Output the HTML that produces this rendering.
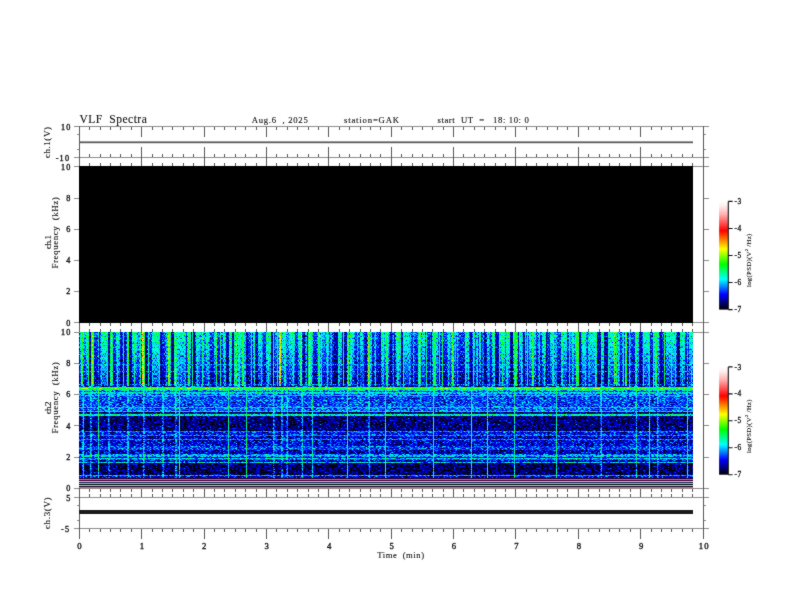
<!DOCTYPE html><html><head><meta charset="utf-8"><style>html,body{margin:0;padding:0;background:#fff;width:792px;height:612px;overflow:hidden;position:relative}</style></head><body><svg width="792" height="612" viewBox="0 0 792 612" style="position:absolute;left:0;top:0;will-change:transform"><defs><filter id="bl" filterUnits="userSpaceOnUse" x="0" y="0" width="792" height="612" color-interpolation-filters="sRGB"><feConvolveMatrix order="3" kernelMatrix="1 2 1 2 24 2 1 2 1" edgeMode="duplicate"/></filter></defs><g filter="url(#bl)"><rect x="0" y="0" width="792" height="612" fill="#fff"/><defs><linearGradient id="cb" x1="0" y1="0" x2="0" y2="1"><stop offset="0" stop-color="#fff"/><stop offset="0.04" stop-color="#fff0f0"/><stop offset="0.12" stop-color="#ffb0b0"/><stop offset="0.27" stop-color="#ff0000"/><stop offset="0.44" stop-color="#ffff00"/><stop offset="0.58" stop-color="#00ff00"/><stop offset="0.72" stop-color="#00ffff"/><stop offset="0.86" stop-color="#0000ff"/><stop offset="1" stop-color="#000000"/></linearGradient></defs><path d="M79.0 126.5H704.0M79.0 157.5H704.0M79.0 166.5H704.0M79.0 322.5H704.0M79.0 332.5H704.0M79.0 488.5H704.0M79.0 497.5H704.0M79.0 528.5H704.0M74.0 126.5H79.0M704.0 126.5H709.0M74.0 157.5H79.0M704.0 157.5H709.0M74.0 166.5H79.0M704.0 166.5H709.0M74.0 322.5H79.0M704.0 322.5H709.0M74.0 332.5H79.0M704.0 332.5H709.0M74.0 488.5H79.0M704.0 488.5H709.0M74.0 497.5H79.0M704.0 497.5H709.0M74.0 528.5H79.0M704.0 528.5H709.0M74.0 198.5H79.0M704.0 198.5H709.0M74.0 229.5H79.0M704.0 229.5H709.0M74.0 260.5H79.0M704.0 260.5H709.0M74.0 291.5H79.0M704.0 291.5H709.0M74.0 363.5H79.0M704.0 363.5H709.0M74.0 394.5H79.0M704.0 394.5H709.0M74.0 425.5H79.0M704.0 425.5H709.0M74.0 457.5H79.0M704.0 457.5H709.0M77.0 134.5H79.0M704.0 134.5H706.0M77.0 149.5H79.0M704.0 149.5H706.0M77.0 505.5H79.0M704.0 505.5H706.0M77.0 520.5H79.0M704.0 520.5H706.0" stroke="#8c8c8c" stroke-width="1" fill="none"/><path d="M79.5 126.0V539.0M703.5 126.0V539.0M79.5 127.0V137.0M79.5 147.0V157.0M79.5 157.0V166.0M79.5 323.0V332.0M79.5 489.0V497.0M79.5 529.0V539.0M89.5 127.0V130.0M89.5 154.0V157.0M89.5 163.0V166.0M89.5 323.0V326.0M89.5 329.0V332.0M89.5 489.0V492.0M89.5 494.0V497.0M89.5 529.0V532.0M100.5 127.0V130.0M100.5 154.0V157.0M100.5 163.0V166.0M100.5 323.0V326.0M100.5 329.0V332.0M100.5 489.0V492.0M100.5 494.0V497.0M100.5 529.0V532.0M110.5 127.0V130.0M110.5 154.0V157.0M110.5 163.0V166.0M110.5 323.0V326.0M110.5 329.0V332.0M110.5 489.0V492.0M110.5 494.0V497.0M110.5 529.0V532.0M120.5 127.0V130.0M120.5 154.0V157.0M120.5 163.0V166.0M120.5 323.0V326.0M120.5 329.0V332.0M120.5 489.0V492.0M120.5 494.0V497.0M120.5 529.0V532.0M131.5 127.0V130.0M131.5 154.0V157.0M131.5 163.0V166.0M131.5 323.0V326.0M131.5 329.0V332.0M131.5 489.0V492.0M131.5 494.0V497.0M131.5 529.0V532.0M141.5 127.0V137.0M141.5 147.0V157.0M141.5 157.0V166.0M141.5 323.0V332.0M141.5 489.0V497.0M141.5 529.0V539.0M152.5 127.0V130.0M152.5 154.0V157.0M152.5 163.0V166.0M152.5 323.0V326.0M152.5 329.0V332.0M152.5 489.0V492.0M152.5 494.0V497.0M152.5 529.0V532.0M162.5 127.0V130.0M162.5 154.0V157.0M162.5 163.0V166.0M162.5 323.0V326.0M162.5 329.0V332.0M162.5 489.0V492.0M162.5 494.0V497.0M162.5 529.0V532.0M172.5 127.0V130.0M172.5 154.0V157.0M172.5 163.0V166.0M172.5 323.0V326.0M172.5 329.0V332.0M172.5 489.0V492.0M172.5 494.0V497.0M172.5 529.0V532.0M183.5 127.0V130.0M183.5 154.0V157.0M183.5 163.0V166.0M183.5 323.0V326.0M183.5 329.0V332.0M183.5 489.0V492.0M183.5 494.0V497.0M183.5 529.0V532.0M193.5 127.0V130.0M193.5 154.0V157.0M193.5 163.0V166.0M193.5 323.0V326.0M193.5 329.0V332.0M193.5 489.0V492.0M193.5 494.0V497.0M193.5 529.0V532.0M204.5 127.0V137.0M204.5 147.0V157.0M204.5 157.0V166.0M204.5 323.0V332.0M204.5 489.0V497.0M204.5 529.0V539.0M214.5 127.0V130.0M214.5 154.0V157.0M214.5 163.0V166.0M214.5 323.0V326.0M214.5 329.0V332.0M214.5 489.0V492.0M214.5 494.0V497.0M214.5 529.0V532.0M224.5 127.0V130.0M224.5 154.0V157.0M224.5 163.0V166.0M224.5 323.0V326.0M224.5 329.0V332.0M224.5 489.0V492.0M224.5 494.0V497.0M224.5 529.0V532.0M235.5 127.0V130.0M235.5 154.0V157.0M235.5 163.0V166.0M235.5 323.0V326.0M235.5 329.0V332.0M235.5 489.0V492.0M235.5 494.0V497.0M235.5 529.0V532.0M245.5 127.0V130.0M245.5 154.0V157.0M245.5 163.0V166.0M245.5 323.0V326.0M245.5 329.0V332.0M245.5 489.0V492.0M245.5 494.0V497.0M245.5 529.0V532.0M256.5 127.0V130.0M256.5 154.0V157.0M256.5 163.0V166.0M256.5 323.0V326.0M256.5 329.0V332.0M256.5 489.0V492.0M256.5 494.0V497.0M256.5 529.0V532.0M266.5 127.0V137.0M266.5 147.0V157.0M266.5 157.0V166.0M266.5 323.0V332.0M266.5 489.0V497.0M266.5 529.0V539.0M276.5 127.0V130.0M276.5 154.0V157.0M276.5 163.0V166.0M276.5 323.0V326.0M276.5 329.0V332.0M276.5 489.0V492.0M276.5 494.0V497.0M276.5 529.0V532.0M287.5 127.0V130.0M287.5 154.0V157.0M287.5 163.0V166.0M287.5 323.0V326.0M287.5 329.0V332.0M287.5 489.0V492.0M287.5 494.0V497.0M287.5 529.0V532.0M297.5 127.0V130.0M297.5 154.0V157.0M297.5 163.0V166.0M297.5 323.0V326.0M297.5 329.0V332.0M297.5 489.0V492.0M297.5 494.0V497.0M297.5 529.0V532.0M308.5 127.0V130.0M308.5 154.0V157.0M308.5 163.0V166.0M308.5 323.0V326.0M308.5 329.0V332.0M308.5 489.0V492.0M308.5 494.0V497.0M308.5 529.0V532.0M318.5 127.0V130.0M318.5 154.0V157.0M318.5 163.0V166.0M318.5 323.0V326.0M318.5 329.0V332.0M318.5 489.0V492.0M318.5 494.0V497.0M318.5 529.0V532.0M328.5 127.0V137.0M328.5 147.0V157.0M328.5 157.0V166.0M328.5 323.0V332.0M328.5 489.0V497.0M328.5 529.0V539.0M339.5 127.0V130.0M339.5 154.0V157.0M339.5 163.0V166.0M339.5 323.0V326.0M339.5 329.0V332.0M339.5 489.0V492.0M339.5 494.0V497.0M339.5 529.0V532.0M349.5 127.0V130.0M349.5 154.0V157.0M349.5 163.0V166.0M349.5 323.0V326.0M349.5 329.0V332.0M349.5 489.0V492.0M349.5 494.0V497.0M349.5 529.0V532.0M360.5 127.0V130.0M360.5 154.0V157.0M360.5 163.0V166.0M360.5 323.0V326.0M360.5 329.0V332.0M360.5 489.0V492.0M360.5 494.0V497.0M360.5 529.0V532.0M370.5 127.0V130.0M370.5 154.0V157.0M370.5 163.0V166.0M370.5 323.0V326.0M370.5 329.0V332.0M370.5 489.0V492.0M370.5 494.0V497.0M370.5 529.0V532.0M380.5 127.0V130.0M380.5 154.0V157.0M380.5 163.0V166.0M380.5 323.0V326.0M380.5 329.0V332.0M380.5 489.0V492.0M380.5 494.0V497.0M380.5 529.0V532.0M391.5 127.0V137.0M391.5 147.0V157.0M391.5 157.0V166.0M391.5 323.0V332.0M391.5 489.0V497.0M391.5 529.0V539.0M401.5 127.0V130.0M401.5 154.0V157.0M401.5 163.0V166.0M401.5 323.0V326.0M401.5 329.0V332.0M401.5 489.0V492.0M401.5 494.0V497.0M401.5 529.0V532.0M412.5 127.0V130.0M412.5 154.0V157.0M412.5 163.0V166.0M412.5 323.0V326.0M412.5 329.0V332.0M412.5 489.0V492.0M412.5 494.0V497.0M412.5 529.0V532.0M422.5 127.0V130.0M422.5 154.0V157.0M422.5 163.0V166.0M422.5 323.0V326.0M422.5 329.0V332.0M422.5 489.0V492.0M422.5 494.0V497.0M422.5 529.0V532.0M432.5 127.0V130.0M432.5 154.0V157.0M432.5 163.0V166.0M432.5 323.0V326.0M432.5 329.0V332.0M432.5 489.0V492.0M432.5 494.0V497.0M432.5 529.0V532.0M443.5 127.0V130.0M443.5 154.0V157.0M443.5 163.0V166.0M443.5 323.0V326.0M443.5 329.0V332.0M443.5 489.0V492.0M443.5 494.0V497.0M443.5 529.0V532.0M453.5 127.0V137.0M453.5 147.0V157.0M453.5 157.0V166.0M453.5 323.0V332.0M453.5 489.0V497.0M453.5 529.0V539.0M463.5 127.0V130.0M463.5 154.0V157.0M463.5 163.0V166.0M463.5 323.0V326.0M463.5 329.0V332.0M463.5 489.0V492.0M463.5 494.0V497.0M463.5 529.0V532.0M474.5 127.0V130.0M474.5 154.0V157.0M474.5 163.0V166.0M474.5 323.0V326.0M474.5 329.0V332.0M474.5 489.0V492.0M474.5 494.0V497.0M474.5 529.0V532.0M484.5 127.0V130.0M484.5 154.0V157.0M484.5 163.0V166.0M484.5 323.0V326.0M484.5 329.0V332.0M484.5 489.0V492.0M484.5 494.0V497.0M484.5 529.0V532.0M495.5 127.0V130.0M495.5 154.0V157.0M495.5 163.0V166.0M495.5 323.0V326.0M495.5 329.0V332.0M495.5 489.0V492.0M495.5 494.0V497.0M495.5 529.0V532.0M505.5 127.0V130.0M505.5 154.0V157.0M505.5 163.0V166.0M505.5 323.0V326.0M505.5 329.0V332.0M505.5 489.0V492.0M505.5 494.0V497.0M505.5 529.0V532.0M515.5 127.0V137.0M515.5 147.0V157.0M515.5 157.0V166.0M515.5 323.0V332.0M515.5 489.0V497.0M515.5 529.0V539.0M526.5 127.0V130.0M526.5 154.0V157.0M526.5 163.0V166.0M526.5 323.0V326.0M526.5 329.0V332.0M526.5 489.0V492.0M526.5 494.0V497.0M526.5 529.0V532.0M536.5 127.0V130.0M536.5 154.0V157.0M536.5 163.0V166.0M536.5 323.0V326.0M536.5 329.0V332.0M536.5 489.0V492.0M536.5 494.0V497.0M536.5 529.0V532.0M547.5 127.0V130.0M547.5 154.0V157.0M547.5 163.0V166.0M547.5 323.0V326.0M547.5 329.0V332.0M547.5 489.0V492.0M547.5 494.0V497.0M547.5 529.0V532.0M557.5 127.0V130.0M557.5 154.0V157.0M557.5 163.0V166.0M557.5 323.0V326.0M557.5 329.0V332.0M557.5 489.0V492.0M557.5 494.0V497.0M557.5 529.0V532.0M567.5 127.0V130.0M567.5 154.0V157.0M567.5 163.0V166.0M567.5 323.0V326.0M567.5 329.0V332.0M567.5 489.0V492.0M567.5 494.0V497.0M567.5 529.0V532.0M578.5 127.0V137.0M578.5 147.0V157.0M578.5 157.0V166.0M578.5 323.0V332.0M578.5 489.0V497.0M578.5 529.0V539.0M588.5 127.0V130.0M588.5 154.0V157.0M588.5 163.0V166.0M588.5 323.0V326.0M588.5 329.0V332.0M588.5 489.0V492.0M588.5 494.0V497.0M588.5 529.0V532.0M599.5 127.0V130.0M599.5 154.0V157.0M599.5 163.0V166.0M599.5 323.0V326.0M599.5 329.0V332.0M599.5 489.0V492.0M599.5 494.0V497.0M599.5 529.0V532.0M609.5 127.0V130.0M609.5 154.0V157.0M609.5 163.0V166.0M609.5 323.0V326.0M609.5 329.0V332.0M609.5 489.0V492.0M609.5 494.0V497.0M609.5 529.0V532.0M619.5 127.0V130.0M619.5 154.0V157.0M619.5 163.0V166.0M619.5 323.0V326.0M619.5 329.0V332.0M619.5 489.0V492.0M619.5 494.0V497.0M619.5 529.0V532.0M630.5 127.0V130.0M630.5 154.0V157.0M630.5 163.0V166.0M630.5 323.0V326.0M630.5 329.0V332.0M630.5 489.0V492.0M630.5 494.0V497.0M630.5 529.0V532.0M640.5 127.0V137.0M640.5 147.0V157.0M640.5 157.0V166.0M640.5 323.0V332.0M640.5 489.0V497.0M640.5 529.0V539.0M651.5 127.0V130.0M651.5 154.0V157.0M651.5 163.0V166.0M651.5 323.0V326.0M651.5 329.0V332.0M651.5 489.0V492.0M651.5 494.0V497.0M651.5 529.0V532.0M661.5 127.0V130.0M661.5 154.0V157.0M661.5 163.0V166.0M661.5 323.0V326.0M661.5 329.0V332.0M661.5 489.0V492.0M661.5 494.0V497.0M661.5 529.0V532.0M671.5 127.0V130.0M671.5 154.0V157.0M671.5 163.0V166.0M671.5 323.0V326.0M671.5 329.0V332.0M671.5 489.0V492.0M671.5 494.0V497.0M671.5 529.0V532.0M682.5 127.0V130.0M682.5 154.0V157.0M682.5 163.0V166.0M682.5 323.0V326.0M682.5 329.0V332.0M682.5 489.0V492.0M682.5 494.0V497.0M682.5 529.0V532.0M692.5 127.0V130.0M692.5 154.0V157.0M692.5 163.0V166.0M692.5 323.0V326.0M692.5 329.0V332.0M692.5 489.0V492.0M692.5 494.0V497.0M692.5 529.0V532.0M703.5 127.0V137.0M703.5 147.0V157.0M703.5 157.0V166.0M703.5 323.0V332.0M703.5 489.0V497.0M703.5 529.0V539.0" stroke="#585858" stroke-width="1" fill="none"/><rect x="79" y="166" width="614" height="157" fill="#000"/><g><defs><filter id="spu" filterUnits="userSpaceOnUse" x="79" y="332" width="614.0" height="54.5" color-interpolation-filters="sRGB"><feTurbulence type="fractalNoise" baseFrequency="1.0 0.45" numOctaves="2" seed="7" result="n"/><feColorMatrix in="n" type="matrix" values="1 0 0 0 0 1 0 0 0 0 1 0 0 0 0 0 0 0 0 1" result="g"/><feComposite in="SourceGraphic" in2="g" operator="arithmetic" k1="0" k2="1" k3="0.55" k4="-0.275" result="s"/><feComponentTransfer in="s"><feFuncR type="table" tableValues="0.000 0.000 0.000 0.000 0.000 0.000 0.000 0.000 0.000 0.000 0.000 0.000 0.000 0.000 0.000 0.000 0.000 0.000 0.141 0.322 0.502 0.678 0.859 1.000 1.000 1.000 1.000 1.000 1.000 1.000 1.000 1.000 1.000 1.000 1.000 1.000 1.000 1.000 1.000 1.000 1.000"/><feFuncG type="table" tableValues="0.000 0.000 0.000 0.000 0.000 0.000 0.000 0.180 0.357 0.537 0.714 0.894 1.000 1.000 1.000 1.000 1.000 1.000 1.000 1.000 1.000 1.000 1.000 0.961 0.769 0.576 0.384 0.192 0.000 0.090 0.184 0.275 0.365 0.459 0.549 0.639 0.733 0.824 0.898 0.949 1.000"/><feFuncB type="table" tableValues="0.000 0.169 0.333 0.502 0.667 0.831 1.000 1.000 1.000 1.000 1.000 1.000 0.929 0.749 0.573 0.392 0.216 0.035 0.000 0.000 0.000 0.000 0.000 0.000 0.000 0.000 0.000 0.000 0.000 0.090 0.184 0.275 0.365 0.459 0.549 0.639 0.733 0.824 0.898 0.949 1.000"/><feFuncA type="linear" slope="0" intercept="1"/></feComponentTransfer></filter><filter id="spl" filterUnits="userSpaceOnUse" x="79" y="386.5" width="614.0" height="91.5" color-interpolation-filters="sRGB"><feTurbulence type="fractalNoise" baseFrequency="0.5 1.5" numOctaves="2" seed="11" result="n"/><feColorMatrix in="n" type="matrix" values="1 0 0 0 0 1 0 0 0 0 1 0 0 0 0 0 0 0 0 1" result="g"/><feComposite in="SourceGraphic" in2="g" operator="arithmetic" k1="0" k2="1" k3="0.5" k4="-0.25" result="s"/><feComponentTransfer in="s"><feFuncR type="table" tableValues="0.000 0.000 0.000 0.000 0.000 0.000 0.000 0.000 0.000 0.000 0.000 0.000 0.000 0.000 0.000 0.000 0.000 0.000 0.141 0.322 0.502 0.678 0.859 1.000 1.000 1.000 1.000 1.000 1.000 1.000 1.000 1.000 1.000 1.000 1.000 1.000 1.000 1.000 1.000 1.000 1.000"/><feFuncG type="table" tableValues="0.000 0.000 0.000 0.000 0.000 0.000 0.000 0.180 0.357 0.537 0.714 0.894 1.000 1.000 1.000 1.000 1.000 1.000 1.000 1.000 1.000 1.000 1.000 0.961 0.769 0.576 0.384 0.192 0.000 0.090 0.184 0.275 0.365 0.459 0.549 0.639 0.733 0.824 0.898 0.949 1.000"/><feFuncB type="table" tableValues="0.000 0.169 0.333 0.502 0.667 0.831 1.000 1.000 1.000 1.000 1.000 1.000 0.929 0.749 0.573 0.392 0.216 0.035 0.000 0.000 0.000 0.000 0.000 0.000 0.000 0.000 0.000 0.000 0.000 0.090 0.184 0.275 0.365 0.459 0.549 0.639 0.733 0.824 0.898 0.949 1.000"/><feFuncA type="linear" slope="0" intercept="1"/></feComponentTransfer></filter><linearGradient id="fade2" x1="0" y1="0" x2="0" y2="1"><stop offset="0" stop-color="#000" stop-opacity="0"/><stop offset="1" stop-color="#000" stop-opacity="0.55"/></linearGradient></defs><g filter="url(#spu)"><rect x="79" y="332" width="614.0" height="54.5" fill="#000"/><rect x="79.0" y="332" width="1.0" height="54.5" fill="#303030"/><rect x="80.0" y="332" width="1.0" height="54.5" fill="#545454"/><rect x="83.0" y="332" width="1.0" height="54.5" fill="#545454"/><rect x="84.0" y="332" width="2.0" height="54.5" fill="#424242"/><rect x="86.0" y="332" width="2.5" height="54.5" fill="#5e5e5e"/><rect x="88.5" y="332" width="2.5" height="54.5" fill="#171717"/><rect x="91.0" y="332" width="0.2" height="54.5" fill="#545454"/><rect x="93.2" y="332" width="0.2" height="54.5" fill="#545454"/><rect x="93.5" y="332" width="4.5" height="54.5" fill="#303030"/><rect x="98.0" y="332" width="1.0" height="54.5" fill="#545454"/><rect x="99.0" y="332" width="3.0" height="54.5" fill="#171717"/><rect x="102.0" y="332" width="6.5" height="54.5" fill="#5e5e5e"/><rect x="108.5" y="332" width="2.0" height="54.5" fill="#171717"/><rect x="110.5" y="332" width="0.2" height="54.5" fill="#545454"/><rect x="112.8" y="332" width="0.2" height="54.5" fill="#545454"/><rect x="113.0" y="332" width="2.5" height="54.5" fill="#303030"/><rect x="115.5" y="332" width="5.0" height="54.5" fill="#545454"/><rect x="120.5" y="332" width="2.0" height="54.5" fill="#1f1f1f"/><rect x="122.5" y="332" width="1.5" height="54.5" fill="#545454"/><rect x="124.0" y="332" width="3.0" height="54.5" fill="#1f1f1f"/><rect x="129.0" y="332" width="3.0" height="54.5" fill="#1f1f1f"/><rect x="132.0" y="332" width="5.0" height="54.5" fill="#545454"/><rect x="137.0" y="332" width="5.0" height="54.5" fill="#424242"/><rect x="144.0" y="332" width="2.5" height="54.5" fill="#171717"/><rect x="146.5" y="332" width="5.5" height="54.5" fill="#303030"/><rect x="152.0" y="332" width="8.0" height="54.5" fill="#5e5e5e"/><rect x="160.0" y="332" width="2.0" height="54.5" fill="#1f1f1f"/><rect x="162.0" y="332" width="5.0" height="54.5" fill="#303030"/><rect x="167.0" y="332" width="1.0" height="54.5" fill="#545454"/><rect x="170.0" y="332" width="1.0" height="54.5" fill="#545454"/><rect x="171.0" y="332" width="3.0" height="54.5" fill="#171717"/><rect x="174.0" y="332" width="0.5" height="54.5" fill="#545454"/><rect x="176.5" y="332" width="0.5" height="54.5" fill="#545454"/><rect x="177.0" y="332" width="6.0" height="54.5" fill="#545454"/><rect x="183.0" y="332" width="2.0" height="54.5" fill="#545454"/><rect x="185.0" y="332" width="1.6" height="54.5" fill="#1f1f1f"/><rect x="186.6" y="332" width="1.2" height="54.5" fill="#545454"/><rect x="189.8" y="332" width="1.2" height="54.5" fill="#545454"/><rect x="191.0" y="332" width="4.4" height="54.5" fill="#171717"/><rect x="195.4" y="332" width="4.6" height="54.5" fill="#545454"/><rect x="200.0" y="332" width="6.0" height="54.5" fill="#424242"/><rect x="206.0" y="332" width="2.7" height="54.5" fill="#5e5e5e"/><rect x="208.7" y="332" width="5.0" height="54.5" fill="#303030"/><rect x="213.7" y="332" width="3.3" height="54.5" fill="#545454"/><rect x="217.0" y="332" width="5.5" height="54.5" fill="#303030"/><rect x="222.5" y="332" width="2.5" height="54.5" fill="#545454"/><rect x="225.0" y="332" width="4.0" height="54.5" fill="#1f1f1f"/><rect x="229.0" y="332" width="3.0" height="54.5" fill="#5e5e5e"/><rect x="232.0" y="332" width="2.5" height="54.5" fill="#1f1f1f"/><rect x="234.5" y="332" width="0.9" height="54.5" fill="#545454"/><rect x="237.4" y="332" width="0.9" height="54.5" fill="#545454"/><rect x="238.3" y="332" width="2.7" height="54.5" fill="#545454"/><rect x="241.0" y="332" width="0.8" height="54.5" fill="#545454"/><rect x="243.8" y="332" width="0.8" height="54.5" fill="#545454"/><rect x="244.7" y="332" width="3.1" height="54.5" fill="#1f1f1f"/><rect x="247.8" y="332" width="5.1" height="54.5" fill="#303030"/><rect x="252.9" y="332" width="1.9" height="54.5" fill="#545454"/><rect x="254.8" y="332" width="3.2" height="54.5" fill="#1f1f1f"/><rect x="258.0" y="332" width="3.0" height="54.5" fill="#545454"/><rect x="261.0" y="332" width="5.0" height="54.5" fill="#303030"/><rect x="266.0" y="332" width="5.0" height="54.5" fill="#5e5e5e"/><rect x="271.0" y="332" width="4.0" height="54.5" fill="#1f1f1f"/><rect x="275.0" y="332" width="4.0" height="54.5" fill="#424242"/><rect x="281.0" y="332" width="3.0" height="54.5" fill="#545454"/><rect x="284.0" y="332" width="0.3" height="54.5" fill="#545454"/><rect x="286.3" y="332" width="0.3" height="54.5" fill="#545454"/><rect x="286.6" y="332" width="2.4" height="54.5" fill="#424242"/><rect x="289.0" y="332" width="6.4" height="54.5" fill="#545454"/><rect x="295.4" y="332" width="2.6" height="54.5" fill="#303030"/><rect x="298.0" y="332" width="2.0" height="54.5" fill="#545454"/><rect x="300.0" y="332" width="0.2" height="54.5" fill="#545454"/><rect x="302.2" y="332" width="0.2" height="54.5" fill="#545454"/><rect x="302.4" y="332" width="5.6" height="54.5" fill="#1f1f1f"/><rect x="308.0" y="332" width="0.3" height="54.5" fill="#545454"/><rect x="310.3" y="332" width="0.3" height="54.5" fill="#545454"/><rect x="310.6" y="332" width="2.4" height="54.5" fill="#545454"/><rect x="313.0" y="332" width="5.0" height="54.5" fill="#303030"/><rect x="318.0" y="332" width="0.4" height="54.5" fill="#545454"/><rect x="320.4" y="332" width="0.3" height="54.5" fill="#545454"/><rect x="320.7" y="332" width="5.0" height="54.5" fill="#424242"/><rect x="325.7" y="332" width="3.3" height="54.5" fill="#545454"/><rect x="329.0" y="332" width="5.5" height="54.5" fill="#303030"/><rect x="334.5" y="332" width="3.8" height="54.5" fill="#1f1f1f"/><rect x="338.3" y="332" width="3.7" height="54.5" fill="#545454"/><rect x="342.0" y="332" width="5.0" height="54.5" fill="#1f1f1f"/><rect x="347.0" y="332" width="0.4" height="54.5" fill="#545454"/><rect x="349.4" y="332" width="0.3" height="54.5" fill="#545454"/><rect x="349.7" y="332" width="5.1" height="54.5" fill="#545454"/><rect x="354.8" y="332" width="5.0" height="54.5" fill="#303030"/><rect x="359.8" y="332" width="3.2" height="54.5" fill="#545454"/><rect x="363.0" y="332" width="4.4" height="54.5" fill="#1f1f1f"/><rect x="367.4" y="332" width="0.3" height="54.5" fill="#545454"/><rect x="369.7" y="332" width="0.3" height="54.5" fill="#545454"/><rect x="370.0" y="332" width="2.4" height="54.5" fill="#545454"/><rect x="372.4" y="332" width="6.6" height="54.5" fill="#303030"/><rect x="379.0" y="332" width="2.0" height="54.5" fill="#1f1f1f"/><rect x="381.0" y="332" width="3.7" height="54.5" fill="#5e5e5e"/><rect x="384.7" y="332" width="1.5" height="54.5" fill="#545454"/><rect x="388.2" y="332" width="1.5" height="54.5" fill="#545454"/><rect x="389.7" y="332" width="5.7" height="54.5" fill="#1f1f1f"/><rect x="395.4" y="332" width="5.6" height="54.5" fill="#5e5e5e"/><rect x="401.0" y="332" width="3.0" height="54.5" fill="#1f1f1f"/><rect x="404.0" y="332" width="5.3" height="54.5" fill="#545454"/><rect x="409.3" y="332" width="8.2" height="54.5" fill="#303030"/><rect x="417.5" y="332" width="0.9" height="54.5" fill="#545454"/><rect x="420.4" y="332" width="0.9" height="54.5" fill="#545454"/><rect x="421.3" y="332" width="3.7" height="54.5" fill="#545454"/><rect x="425.0" y="332" width="4.5" height="54.5" fill="#303030"/><rect x="429.5" y="332" width="2.5" height="54.5" fill="#171717"/><rect x="432.0" y="332" width="2.1" height="54.5" fill="#545454"/><rect x="436.1" y="332" width="2.2" height="54.5" fill="#545454"/><rect x="438.3" y="332" width="8.9" height="54.5" fill="#303030"/><rect x="447.2" y="332" width="3.1" height="54.5" fill="#545454"/><rect x="450.3" y="332" width="1.2" height="54.5" fill="#545454"/><rect x="453.6" y="332" width="1.2" height="54.5" fill="#545454"/><rect x="454.8" y="332" width="1.9" height="54.5" fill="#545454"/><rect x="456.7" y="332" width="9.3" height="54.5" fill="#303030"/><rect x="466.0" y="332" width="2.6" height="54.5" fill="#545454"/><rect x="468.6" y="332" width="3.8" height="54.5" fill="#1f1f1f"/><rect x="472.4" y="332" width="2.6" height="54.5" fill="#545454"/><rect x="475.0" y="332" width="4.0" height="54.5" fill="#303030"/><rect x="479.0" y="332" width="2.5" height="54.5" fill="#5e5e5e"/><rect x="481.5" y="332" width="5.1" height="54.5" fill="#1f1f1f"/><rect x="486.6" y="332" width="2.4" height="54.5" fill="#545454"/><rect x="489.0" y="332" width="2.6" height="54.5" fill="#303030"/><rect x="491.6" y="332" width="3.8" height="54.5" fill="#5e5e5e"/><rect x="495.4" y="332" width="3.8" height="54.5" fill="#1f1f1f"/><rect x="499.2" y="332" width="3.2" height="54.5" fill="#545454"/><rect x="502.4" y="332" width="3.1" height="54.5" fill="#5e5e5e"/><rect x="505.5" y="332" width="1.5" height="54.5" fill="#545454"/><rect x="507.0" y="332" width="3.5" height="54.5" fill="#5e5e5e"/><rect x="510.5" y="332" width="2.5" height="54.5" fill="#171717"/><rect x="513.0" y="332" width="1.0" height="54.5" fill="#545454"/><rect x="514.0" y="332" width="1.0" height="54.5" fill="#545454"/><rect x="517.0" y="332" width="1.0" height="54.5" fill="#545454"/><rect x="518.0" y="332" width="1.0" height="54.5" fill="#1f1f1f"/><rect x="519.0" y="332" width="3.0" height="54.5" fill="#545454"/><rect x="522.0" y="332" width="3.0" height="54.5" fill="#1f1f1f"/><rect x="525.0" y="332" width="1.0" height="54.5" fill="#545454"/><rect x="526.0" y="332" width="2.5" height="54.5" fill="#303030"/><rect x="528.5" y="332" width="2.5" height="54.5" fill="#545454"/><rect x="531.0" y="332" width="0.8" height="54.5" fill="#545454"/><rect x="533.8" y="332" width="0.8" height="54.5" fill="#545454"/><rect x="534.5" y="332" width="1.5" height="54.5" fill="#545454"/><rect x="536.0" y="332" width="6.0" height="54.5" fill="#303030"/><rect x="542.0" y="332" width="4.0" height="54.5" fill="#545454"/><rect x="546.0" y="332" width="3.7" height="54.5" fill="#171717"/><rect x="549.7" y="332" width="2.3" height="54.5" fill="#545454"/><rect x="552.0" y="332" width="0.4" height="54.5" fill="#545454"/><rect x="554.4" y="332" width="0.4" height="54.5" fill="#545454"/><rect x="554.8" y="332" width="6.2" height="54.5" fill="#303030"/><rect x="561.0" y="332" width="6.4" height="54.5" fill="#545454"/><rect x="567.4" y="332" width="2.6" height="54.5" fill="#303030"/><rect x="570.0" y="332" width="5.0" height="54.5" fill="#424242"/><rect x="575.0" y="332" width="1.0" height="54.5" fill="#545454"/><rect x="578.0" y="332" width="1.0" height="54.5" fill="#545454"/><rect x="579.0" y="332" width="2.3" height="54.5" fill="#1f1f1f"/><rect x="581.3" y="332" width="3.7" height="54.5" fill="#5e5e5e"/><rect x="585.0" y="332" width="3.0" height="54.5" fill="#303030"/><rect x="588.0" y="332" width="9.0" height="54.5" fill="#545454"/><rect x="597.0" y="332" width="4.0" height="54.5" fill="#1f1f1f"/><rect x="601.0" y="332" width="3.0" height="54.5" fill="#5e5e5e"/><rect x="604.0" y="332" width="4.5" height="54.5" fill="#1f1f1f"/><rect x="608.5" y="332" width="6.9" height="54.5" fill="#545454"/><rect x="615.4" y="332" width="0.1" height="54.5" fill="#545454"/><rect x="617.5" y="332" width="0.1" height="54.5" fill="#545454"/><rect x="617.6" y="332" width="6.9" height="54.5" fill="#303030"/><rect x="624.5" y="332" width="0.5" height="54.5" fill="#545454"/><rect x="627.0" y="332" width="0.5" height="54.5" fill="#545454"/><rect x="627.5" y="332" width="7.5" height="54.5" fill="#303030"/><rect x="635.0" y="332" width="4.0" height="54.5" fill="#545454"/><rect x="639.0" y="332" width="3.6" height="54.5" fill="#1f1f1f"/><rect x="642.6" y="332" width="7.6" height="54.5" fill="#545454"/><rect x="650.2" y="332" width="2.8" height="54.5" fill="#303030"/><rect x="653.0" y="332" width="2.1" height="54.5" fill="#545454"/><rect x="657.1" y="332" width="2.1" height="54.5" fill="#545454"/><rect x="659.3" y="332" width="2.3" height="54.5" fill="#1f1f1f"/><rect x="661.6" y="332" width="3.8" height="54.5" fill="#303030"/><rect x="665.4" y="332" width="10.6" height="54.5" fill="#545454"/><rect x="676.0" y="332" width="3.8" height="54.5" fill="#171717"/><rect x="679.8" y="332" width="5.2" height="54.5" fill="#5e5e5e"/><rect x="685.0" y="332" width="3.8" height="54.5" fill="#303030"/><rect x="688.8" y="332" width="4.2" height="54.5" fill="#545454"/><rect x="79" y="332" width="614.0" height="54.5" fill="url(#fade2)"/><rect x="81.0" y="332" width="2.0" height="54.5" fill="#6b6b6b"/><rect x="91.2" y="332" width="2.0" height="54.5" fill="#7d7d7d"/><rect x="110.8" y="332" width="2.0" height="54.5" fill="#6b6b6b"/><rect x="127.0" y="332" width="2.0" height="54.5" fill="#6b6b6b"/><rect x="142.0" y="332" width="2.0" height="54.5" fill="#8f8f8f"/><rect x="168.0" y="332" width="2.0" height="54.5" fill="#7d7d7d"/><rect x="174.5" y="332" width="2.0" height="54.5" fill="#8f8f8f"/><rect x="187.8" y="332" width="2.0" height="54.5" fill="#6b6b6b"/><rect x="235.4" y="332" width="2.0" height="54.5" fill="#6b6b6b"/><rect x="241.8" y="332" width="2.0" height="54.5" fill="#6b6b6b"/><rect x="279.0" y="332" width="2.0" height="54.5" fill="#8f8f8f"/><rect x="284.3" y="332" width="2.0" height="54.5" fill="#6b6b6b"/><rect x="300.2" y="332" width="2.0" height="54.5" fill="#7d7d7d"/><rect x="308.3" y="332" width="2.0" height="54.5" fill="#7d7d7d"/><rect x="318.4" y="332" width="2.0" height="54.5" fill="#6b6b6b"/><rect x="347.4" y="332" width="2.0" height="54.5" fill="#6b6b6b"/><rect x="367.7" y="332" width="2.0" height="54.5" fill="#7d7d7d"/><rect x="386.2" y="332" width="2.0" height="54.5" fill="#6b6b6b"/><rect x="418.4" y="332" width="2.0" height="54.5" fill="#7d7d7d"/><rect x="434.1" y="332" width="2.0" height="54.5" fill="#6b6b6b"/><rect x="451.6" y="332" width="2.0" height="54.5" fill="#6b6b6b"/><rect x="515.0" y="332" width="2.0" height="54.5" fill="#6b6b6b"/><rect x="531.8" y="332" width="2.0" height="54.5" fill="#6b6b6b"/><rect x="552.4" y="332" width="2.0" height="54.5" fill="#6b6b6b"/><rect x="576.0" y="332" width="2.0" height="54.5" fill="#6b6b6b"/><rect x="615.5" y="332" width="2.0" height="54.5" fill="#6b6b6b"/><rect x="625.0" y="332" width="2.0" height="54.5" fill="#6b6b6b"/><rect x="655.1" y="332" width="2.0" height="54.5" fill="#6b6b6b"/><rect x="88.1" y="332" width="1" height="54.5" fill="#7a7a7a" opacity="0.85"/><rect x="92.9" y="332" width="1" height="54.5" fill="#7a7a7a" opacity="0.85"/><rect x="100.6" y="332" width="1" height="54.5" fill="#7a7a7a" opacity="0.85"/><rect x="106.9" y="332" width="1" height="54.5" fill="#737373" opacity="0.85"/><rect x="110.0" y="332" width="1" height="54.5" fill="#6b6b6b" opacity="0.85"/><rect x="116.9" y="332" width="1" height="54.5" fill="#5c5c5c" opacity="0.85"/><rect x="123.1" y="332" width="1" height="54.5" fill="#5c5c5c" opacity="0.85"/><rect x="126.7" y="332" width="1" height="54.5" fill="#6b6b6b" opacity="0.85"/><rect x="134.1" y="332" width="1" height="54.5" fill="#6b6b6b" opacity="0.85"/><rect x="139.8" y="332" width="1" height="54.5" fill="#737373" opacity="0.85"/><rect x="144.0" y="332" width="1" height="54.5" fill="#7a7a7a" opacity="0.85"/><rect x="148.1" y="332" width="1" height="54.5" fill="#666666" opacity="0.85"/><rect x="152.0" y="332" width="1" height="54.5" fill="#4c4c4c" opacity="0.85"/><rect x="158.8" y="332" width="1" height="54.5" fill="#5c5c5c" opacity="0.85"/><rect x="165.7" y="332" width="1" height="54.5" fill="#545454" opacity="0.85"/><rect x="169.3" y="332" width="1" height="54.5" fill="#737373" opacity="0.85"/><rect x="174.6" y="332" width="1" height="54.5" fill="#5c5c5c" opacity="0.85"/><rect x="177.6" y="332" width="1" height="54.5" fill="#4c4c4c" opacity="0.85"/><rect x="180.6" y="332" width="1" height="54.5" fill="#4c4c4c" opacity="0.85"/><rect x="184.7" y="332" width="1" height="54.5" fill="#5c5c5c" opacity="0.85"/><rect x="192.0" y="332" width="1" height="54.5" fill="#666666" opacity="0.85"/><rect x="196.6" y="332" width="1" height="54.5" fill="#5c5c5c" opacity="0.85"/><rect x="202.3" y="332" width="1" height="54.5" fill="#7a7a7a" opacity="0.85"/><rect x="208.4" y="332" width="1" height="54.5" fill="#5c5c5c" opacity="0.85"/><rect x="216.1" y="332" width="1" height="54.5" fill="#7a7a7a" opacity="0.85"/><rect x="220.1" y="332" width="1" height="54.5" fill="#6b6b6b" opacity="0.85"/><rect x="224.6" y="332" width="1" height="54.5" fill="#666666" opacity="0.85"/><rect x="229.7" y="332" width="1" height="54.5" fill="#5c5c5c" opacity="0.85"/><rect x="234.0" y="332" width="1" height="54.5" fill="#666666" opacity="0.85"/><rect x="238.5" y="332" width="1" height="54.5" fill="#737373" opacity="0.85"/><rect x="244.5" y="332" width="1" height="54.5" fill="#737373" opacity="0.85"/><rect x="250.8" y="332" width="1" height="54.5" fill="#666666" opacity="0.85"/><rect x="254.2" y="332" width="1" height="54.5" fill="#666666" opacity="0.85"/><rect x="261.3" y="332" width="1" height="54.5" fill="#6b6b6b" opacity="0.85"/><rect x="267.7" y="332" width="1" height="54.5" fill="#5c5c5c" opacity="0.85"/><rect x="273.2" y="332" width="1" height="54.5" fill="#7a7a7a" opacity="0.85"/><rect x="277.0" y="332" width="1" height="54.5" fill="#666666" opacity="0.85"/><rect x="284.9" y="332" width="1" height="54.5" fill="#545454" opacity="0.85"/><rect x="292.7" y="332" width="1" height="54.5" fill="#666666" opacity="0.85"/><rect x="299.9" y="332" width="1" height="54.5" fill="#545454" opacity="0.85"/><rect x="305.6" y="332" width="1" height="54.5" fill="#6b6b6b" opacity="0.85"/><rect x="310.5" y="332" width="1" height="54.5" fill="#737373" opacity="0.85"/><rect x="317.7" y="332" width="1" height="54.5" fill="#6b6b6b" opacity="0.85"/><rect x="320.9" y="332" width="1" height="54.5" fill="#5c5c5c" opacity="0.85"/><rect x="327.0" y="332" width="1" height="54.5" fill="#5c5c5c" opacity="0.85"/><rect x="330.6" y="332" width="1" height="54.5" fill="#5c5c5c" opacity="0.85"/><rect x="338.3" y="332" width="1" height="54.5" fill="#6b6b6b" opacity="0.85"/><rect x="343.0" y="332" width="1" height="54.5" fill="#666666" opacity="0.85"/><rect x="350.4" y="332" width="1" height="54.5" fill="#666666" opacity="0.85"/><rect x="357.3" y="332" width="1" height="54.5" fill="#545454" opacity="0.85"/><rect x="363.3" y="332" width="1" height="54.5" fill="#4c4c4c" opacity="0.85"/><rect x="370.3" y="332" width="1" height="54.5" fill="#4c4c4c" opacity="0.85"/><rect x="374.7" y="332" width="1" height="54.5" fill="#6b6b6b" opacity="0.85"/><rect x="382.5" y="332" width="1" height="54.5" fill="#545454" opacity="0.85"/><rect x="386.5" y="332" width="1" height="54.5" fill="#737373" opacity="0.85"/><rect x="392.6" y="332" width="1" height="54.5" fill="#5c5c5c" opacity="0.85"/><rect x="397.3" y="332" width="1" height="54.5" fill="#7a7a7a" opacity="0.85"/><rect x="403.0" y="332" width="1" height="54.5" fill="#666666" opacity="0.85"/><rect x="409.4" y="332" width="1" height="54.5" fill="#666666" opacity="0.85"/><rect x="413.3" y="332" width="1" height="54.5" fill="#545454" opacity="0.85"/><rect x="419.4" y="332" width="1" height="54.5" fill="#7a7a7a" opacity="0.85"/><rect x="425.9" y="332" width="1" height="54.5" fill="#6b6b6b" opacity="0.85"/><rect x="429.7" y="332" width="1" height="54.5" fill="#545454" opacity="0.85"/><rect x="433.1" y="332" width="1" height="54.5" fill="#737373" opacity="0.85"/><rect x="438.8" y="332" width="1" height="54.5" fill="#6b6b6b" opacity="0.85"/><rect x="441.9" y="332" width="1" height="54.5" fill="#7a7a7a" opacity="0.85"/><rect x="447.9" y="332" width="1" height="54.5" fill="#4c4c4c" opacity="0.85"/><rect x="452.1" y="332" width="1" height="54.5" fill="#7a7a7a" opacity="0.85"/><rect x="457.3" y="332" width="1" height="54.5" fill="#545454" opacity="0.85"/><rect x="465.2" y="332" width="1" height="54.5" fill="#7a7a7a" opacity="0.85"/><rect x="468.3" y="332" width="1" height="54.5" fill="#6b6b6b" opacity="0.85"/><rect x="473.0" y="332" width="1" height="54.5" fill="#5c5c5c" opacity="0.85"/><rect x="476.6" y="332" width="1" height="54.5" fill="#7a7a7a" opacity="0.85"/><rect x="482.5" y="332" width="1" height="54.5" fill="#5c5c5c" opacity="0.85"/><rect x="488.6" y="332" width="1" height="54.5" fill="#4c4c4c" opacity="0.85"/><rect x="493.7" y="332" width="1" height="54.5" fill="#5c5c5c" opacity="0.85"/><rect x="498.9" y="332" width="1" height="54.5" fill="#5c5c5c" opacity="0.85"/><rect x="502.1" y="332" width="1" height="54.5" fill="#6b6b6b" opacity="0.85"/><rect x="506.6" y="332" width="1" height="54.5" fill="#6b6b6b" opacity="0.85"/><rect x="514.2" y="332" width="1" height="54.5" fill="#737373" opacity="0.85"/><rect x="521.5" y="332" width="1" height="54.5" fill="#737373" opacity="0.85"/><rect x="526.8" y="332" width="1" height="54.5" fill="#6b6b6b" opacity="0.85"/><rect x="533.2" y="332" width="1" height="54.5" fill="#666666" opacity="0.85"/><rect x="538.6" y="332" width="1" height="54.5" fill="#666666" opacity="0.85"/><rect x="543.9" y="332" width="1" height="54.5" fill="#5c5c5c" opacity="0.85"/><rect x="547.5" y="332" width="1" height="54.5" fill="#4c4c4c" opacity="0.85"/><rect x="555.5" y="332" width="1" height="54.5" fill="#5c5c5c" opacity="0.85"/><rect x="561.6" y="332" width="1" height="54.5" fill="#6b6b6b" opacity="0.85"/><rect x="568.9" y="332" width="1" height="54.5" fill="#5c5c5c" opacity="0.85"/><rect x="572.4" y="332" width="1" height="54.5" fill="#666666" opacity="0.85"/><rect x="577.9" y="332" width="1" height="54.5" fill="#737373" opacity="0.85"/><rect x="585.3" y="332" width="1" height="54.5" fill="#666666" opacity="0.85"/><rect x="588.6" y="332" width="1" height="54.5" fill="#4c4c4c" opacity="0.85"/><rect x="595.5" y="332" width="1" height="54.5" fill="#7a7a7a" opacity="0.85"/><rect x="601.4" y="332" width="1" height="54.5" fill="#545454" opacity="0.85"/><rect x="608.2" y="332" width="1" height="54.5" fill="#666666" opacity="0.85"/><rect x="614.0" y="332" width="1" height="54.5" fill="#7a7a7a" opacity="0.85"/><rect x="618.4" y="332" width="1" height="54.5" fill="#6b6b6b" opacity="0.85"/><rect x="622.7" y="332" width="1" height="54.5" fill="#7a7a7a" opacity="0.85"/><rect x="629.3" y="332" width="1" height="54.5" fill="#666666" opacity="0.85"/><rect x="635.6" y="332" width="1" height="54.5" fill="#737373" opacity="0.85"/><rect x="642.8" y="332" width="1" height="54.5" fill="#6b6b6b" opacity="0.85"/><rect x="648.6" y="332" width="1" height="54.5" fill="#666666" opacity="0.85"/><rect x="653.2" y="332" width="1" height="54.5" fill="#666666" opacity="0.85"/><rect x="658.5" y="332" width="1" height="54.5" fill="#4c4c4c" opacity="0.85"/><rect x="664.0" y="332" width="1" height="54.5" fill="#7a7a7a" opacity="0.85"/><rect x="671.0" y="332" width="1" height="54.5" fill="#666666" opacity="0.85"/><rect x="675.4" y="332" width="1" height="54.5" fill="#666666" opacity="0.85"/><rect x="682.1" y="332" width="1" height="54.5" fill="#4c4c4c" opacity="0.85"/><rect x="687.1" y="332" width="1" height="54.5" fill="#4c4c4c" opacity="0.85"/><rect x="691.0" y="332" width="1" height="54.5" fill="#4c4c4c" opacity="0.85"/><rect x="79" y="364" width="614.0" height="1" fill="#464646" opacity="0.5"/><rect x="79" y="371" width="614.0" height="1" fill="#464646" opacity="0.5"/><rect x="79" y="384" width="614.0" height="1" fill="#464646" opacity="0.5"/></g><g filter="url(#spl)"><rect x="79" y="386.5" width="614.0" height="0.50" fill="#333333"/><rect x="79" y="387" width="614.0" height="1.00" fill="#5c5c5c"/><rect x="79" y="388" width="614.0" height="1.00" fill="#707070"/><rect x="79" y="389" width="614.0" height="1.00" fill="#616161"/><rect x="79" y="390" width="614.0" height="1.00" fill="#454545"/><rect x="79" y="391" width="614.0" height="1.00" fill="#2e2e2e"/><rect x="79" y="392" width="614.0" height="1.00" fill="#4c4c4c"/><rect x="79" y="393" width="614.0" height="1.00" fill="#424242"/><rect x="79" y="394" width="614.0" height="1.00" fill="#333333"/><rect x="79" y="395" width="614.0" height="1.00" fill="#424242"/><rect x="79" y="396" width="614.0" height="1.00" fill="#2f2f2f"/><rect x="79" y="397" width="614.0" height="1.00" fill="#2f2f2f"/><rect x="79" y="398" width="614.0" height="1.00" fill="#2f2f2f"/><rect x="79" y="399" width="614.0" height="1.00" fill="#2f2f2f"/><rect x="79" y="400" width="614.0" height="1.00" fill="#2f2f2f"/><rect x="79" y="401" width="614.0" height="1.00" fill="#2f2f2f"/><rect x="79" y="402" width="614.0" height="1.00" fill="#2f2f2f"/><rect x="79" y="403" width="614.0" height="1.00" fill="#2f2f2f"/><rect x="79" y="404" width="614.0" height="1.00" fill="#2f2f2f"/><rect x="79" y="405" width="614.0" height="1.00" fill="#2f2f2f"/><rect x="79" y="406" width="614.0" height="1.00" fill="#2f2f2f"/><rect x="79" y="407" width="614.0" height="1.00" fill="#424242"/><rect x="79" y="408" width="614.0" height="1.00" fill="#333333"/><rect x="79" y="409" width="614.0" height="1.00" fill="#333333"/><rect x="79" y="410" width="614.0" height="1.00" fill="#333333"/><rect x="79" y="411" width="614.0" height="1.00" fill="#454545"/><rect x="79" y="412" width="614.0" height="1.00" fill="#0d0d0d"/><rect x="79" y="413" width="614.0" height="1.00" fill="#1f1f1f"/><rect x="79" y="414" width="614.0" height="1.00" fill="#545454"/><rect x="79" y="415" width="614.0" height="1.00" fill="#474747"/><rect x="79" y="416" width="614.0" height="1.00" fill="#121212"/><rect x="79" y="417" width="614.0" height="1.00" fill="#121212"/><rect x="79" y="418" width="614.0" height="1.00" fill="#121212"/><rect x="79" y="419" width="614.0" height="1.00" fill="#121212"/><rect x="79" y="420" width="614.0" height="1.00" fill="#121212"/><rect x="79" y="421" width="614.0" height="1.00" fill="#121212"/><rect x="79" y="422" width="614.0" height="1.00" fill="#121212"/><rect x="79" y="423" width="614.0" height="1.00" fill="#121212"/><rect x="79" y="424" width="614.0" height="1.00" fill="#121212"/><rect x="79" y="425" width="614.0" height="1.00" fill="#121212"/><rect x="79" y="426" width="614.0" height="1.00" fill="#121212"/><rect x="79" y="427" width="614.0" height="1.00" fill="#121212"/><rect x="79" y="428" width="614.0" height="1.00" fill="#121212"/><rect x="79" y="429" width="614.0" height="1.00" fill="#121212"/><rect x="79" y="430" width="614.0" height="1.00" fill="#121212"/><rect x="79" y="431" width="614.0" height="1.00" fill="#383838"/><rect x="79" y="432" width="614.0" height="1.00" fill="#262626"/><rect x="79" y="433" width="614.0" height="1.00" fill="#262626"/><rect x="79" y="434" width="614.0" height="1.00" fill="#262626"/><rect x="79" y="435" width="614.0" height="1.00" fill="#383838"/><rect x="79" y="436" width="614.0" height="1.00" fill="#1f1f1f"/><rect x="79" y="437" width="614.0" height="1.00" fill="#1f1f1f"/><rect x="79" y="438" width="614.0" height="1.00" fill="#1f1f1f"/><rect x="79" y="439" width="614.0" height="1.00" fill="#383838"/><rect x="79" y="440" width="614.0" height="1.00" fill="#212121"/><rect x="79" y="441" width="614.0" height="1.00" fill="#212121"/><rect x="79" y="442" width="614.0" height="1.00" fill="#212121"/><rect x="79" y="443" width="614.0" height="1.00" fill="#212121"/><rect x="79" y="444" width="614.0" height="1.00" fill="#212121"/><rect x="79" y="445" width="614.0" height="1.00" fill="#212121"/><rect x="79" y="446" width="614.0" height="1.00" fill="#2e2e2e"/><rect x="79" y="447" width="614.0" height="1.00" fill="#2e2e2e"/><rect x="79" y="448" width="614.0" height="1.00" fill="#2e2e2e"/><rect x="79" y="449" width="614.0" height="1.00" fill="#2e2e2e"/><rect x="79" y="450" width="614.0" height="1.00" fill="#1c1c1c"/><rect x="79" y="451" width="614.0" height="1.00" fill="#1c1c1c"/><rect x="79" y="452" width="614.0" height="1.00" fill="#1c1c1c"/><rect x="79" y="453" width="614.0" height="1.00" fill="#1c1c1c"/><rect x="79" y="454" width="614.0" height="1.00" fill="#383838"/><rect x="79" y="455" width="614.0" height="1.00" fill="#424242"/><rect x="79" y="456" width="614.0" height="1.00" fill="#3d3d3d"/><rect x="79" y="457" width="614.0" height="1.00" fill="#1c1c1c"/><rect x="79" y="458" width="614.0" height="1.00" fill="#454545"/><rect x="79" y="459" width="614.0" height="1.00" fill="#333333"/><rect x="79" y="460" width="614.0" height="1.00" fill="#1f1f1f"/><rect x="79" y="461" width="614.0" height="1.00" fill="#1f1f1f"/><rect x="79" y="462" width="614.0" height="1.00" fill="#454545"/><rect x="79" y="463" width="614.0" height="1.00" fill="#0e0e0e"/><rect x="79" y="464" width="614.0" height="1.00" fill="#0e0e0e"/><rect x="79" y="465" width="614.0" height="1.00" fill="#0e0e0e"/><rect x="79" y="466" width="614.0" height="1.00" fill="#0e0e0e"/><rect x="79" y="467" width="614.0" height="1.00" fill="#0e0e0e"/><rect x="79" y="468" width="614.0" height="1.00" fill="#0e0e0e"/><rect x="79" y="469" width="614.0" height="1.00" fill="#0e0e0e"/><rect x="79" y="470" width="614.0" height="1.00" fill="#0e0e0e"/><rect x="79" y="471" width="614.0" height="1.00" fill="#0e0e0e"/><rect x="79" y="472" width="614.0" height="1.00" fill="#0e0e0e"/><rect x="79" y="473" width="614.0" height="1.00" fill="#0e0e0e"/><rect x="79" y="474" width="614.0" height="1.00" fill="#0e0e0e"/><rect x="79" y="475" width="614.0" height="1.00" fill="#3d3d3d"/><rect x="79" y="476" width="614.0" height="1.00" fill="#1f1f1f"/><rect x="79" y="477" width="614.0" height="1.00" fill="#1f1f1f"/><rect x="82.7" y="386.5" width="1" height="101.5" fill="#6e6e6e" opacity="0.7"/><rect x="90.4" y="386.5" width="1" height="101.5" fill="#6e6e6e" opacity="0.7"/><rect x="98" y="386.5" width="1" height="101.5" fill="#6e6e6e" opacity="0.7"/><rect x="108.5" y="386.5" width="1" height="101.5" fill="#6e6e6e" opacity="0.7"/><rect x="127.5" y="386.5" width="1" height="101.5" fill="#6e6e6e" opacity="0.7"/><rect x="143.4" y="386.5" width="1" height="101.5" fill="#6e6e6e" opacity="0.7"/><rect x="162.5" y="386.5" width="1" height="101.5" fill="#6e6e6e" opacity="0.7"/><rect x="175.5" y="386.5" width="1" height="101.5" fill="#6e6e6e" opacity="0.7"/><rect x="179" y="386.5" width="1" height="101.5" fill="#6e6e6e" opacity="0.7"/><rect x="228" y="386.5" width="1" height="101.5" fill="#6e6e6e" opacity="0.7"/><rect x="246" y="386.5" width="1" height="101.5" fill="#6e6e6e" opacity="0.7"/><rect x="273.4" y="386.5" width="1" height="101.5" fill="#6e6e6e" opacity="0.7"/><rect x="281.5" y="386.5" width="1" height="101.5" fill="#6e6e6e" opacity="0.7"/><rect x="286.6" y="386.5" width="1" height="101.5" fill="#6e6e6e" opacity="0.7"/><rect x="301.7" y="386.5" width="1" height="101.5" fill="#6e6e6e" opacity="0.7"/><rect x="311.8" y="386.5" width="1" height="101.5" fill="#6e6e6e" opacity="0.7"/><rect x="347" y="386.5" width="1" height="101.5" fill="#6e6e6e" opacity="0.7"/><rect x="368.6" y="386.5" width="1" height="101.5" fill="#6e6e6e" opacity="0.7"/><rect x="385" y="386.5" width="1" height="101.5" fill="#6e6e6e" opacity="0.7"/><rect x="433" y="386.5" width="1" height="101.5" fill="#6e6e6e" opacity="0.7"/><rect x="471" y="386.5" width="1" height="101.5" fill="#6e6e6e" opacity="0.7"/><rect x="487" y="386.5" width="1" height="101.5" fill="#6e6e6e" opacity="0.7"/><rect x="514" y="386.5" width="1" height="101.5" fill="#6e6e6e" opacity="0.7"/><rect x="556" y="386.5" width="1" height="101.5" fill="#6e6e6e" opacity="0.7"/><rect x="600.6" y="386.5" width="1" height="101.5" fill="#6e6e6e" opacity="0.7"/><rect x="635.8" y="386.5" width="1" height="101.5" fill="#6e6e6e" opacity="0.7"/><rect x="649" y="386.5" width="1" height="101.5" fill="#6e6e6e" opacity="0.7"/><rect x="657.4" y="386.5" width="1" height="101.5" fill="#6e6e6e" opacity="0.7"/><rect x="687" y="386.5" width="1" height="101.5" fill="#6e6e6e" opacity="0.7"/></g><rect x="79" y="478" width="614.0" height="1.00" fill="#1e0032"/><rect x="79" y="479" width="614.0" height="1.00" fill="#d25ac8"/><rect x="79" y="480" width="614.0" height="1.00" fill="#3c0028"/><rect x="79" y="481" width="614.0" height="1.00" fill="#dcb4f0"/><rect x="79" y="482" width="614.0" height="1.00" fill="#281e5a"/><rect x="79" y="483" width="614.0" height="1.00" fill="#50e696"/><rect x="79" y="484" width="614.0" height="1.00" fill="#0a0a14"/><rect x="79" y="485" width="614.0" height="1.00" fill="#78e6e6"/><rect x="79" y="486" width="614.0" height="1.00" fill="#1e0a1e"/><rect x="79" y="487" width="614.0" height="1.00" fill="#e65a96"/></g><rect x="79" y="141.4" width="614" height="1.8" fill="#5a5a5a"/><rect x="79" y="510" width="614" height="4" fill="#1a1a1a"/><rect x="719.1" y="201.4" width="9.0" height="108.2" fill="url(#cb)"/><path d="M728.30 201.40L728.30 309.60M728.30 201.40L732.60 201.40M728.30 228.45L732.60 228.45M728.30 255.50L732.60 255.50M728.30 282.55L732.60 282.55M728.30 309.60L732.60 309.60" stroke="#111" stroke-width="1.1" fill="none"/><rect x="719.1" y="366.9" width="9.0" height="107.8" fill="url(#cb)"/><path d="M728.30 366.90L728.30 474.70M728.30 366.90L732.60 366.90M728.30 393.85L732.60 393.85M728.30 420.80L732.60 420.80M728.30 447.75L732.60 447.75M728.30 474.70L732.60 474.70" stroke="#111" stroke-width="1.1" fill="none"/><g font-family="Liberation Serif" fill="#111" stroke="#111" stroke-width="0.12" xml:space="preserve" style="white-space:pre"><text id="t_title" x="79.40" y="123.0" font-size="11.5" textLength="67.37" lengthAdjust="spacing" >VLF&#160; Spectra</text><text id="t_date" x="251.80" y="122.8" font-size="8.7" textLength="55.95" lengthAdjust="spacing" >Aug.6&#160; , 2025</text><text id="t_stn" x="344.00" y="122.6" font-size="8.7" textLength="55.09" lengthAdjust="spacing" >station=GAK</text><text id="t_ut" x="437.40" y="122.7" font-size="8.7" textLength="91.33" lengthAdjust="spacing" >start&#160; UT&#160; =&#160;&#160; 18: 10: 0</text><text id="t_time" x="377.20" y="557.5" font-size="8.6" textLength="46.83" lengthAdjust="spacing" >Time&#160; (min)</text><text x="71.50" y="129.80" font-size="8.2" letter-spacing="1.2" stroke-width="0.35" text-anchor="end">10</text><text x="70.20" y="160.70" font-size="8.2" letter-spacing="1.2" stroke-width="0.35" text-anchor="end">-10</text><text x="71.50" y="325.60" font-size="8.2" letter-spacing="1.2" stroke-width="0.35" text-anchor="end">0</text><text x="71.50" y="490.80" font-size="8.2" letter-spacing="1.2" stroke-width="0.35" text-anchor="end">0</text><text x="71.50" y="294.42" font-size="8.2" letter-spacing="1.2" stroke-width="0.35" text-anchor="end">2</text><text x="71.50" y="459.68" font-size="8.2" letter-spacing="1.2" stroke-width="0.35" text-anchor="end">2</text><text x="71.50" y="263.24" font-size="8.2" letter-spacing="1.2" stroke-width="0.35" text-anchor="end">4</text><text x="71.50" y="428.56" font-size="8.2" letter-spacing="1.2" stroke-width="0.35" text-anchor="end">4</text><text x="71.50" y="232.06" font-size="8.2" letter-spacing="1.2" stroke-width="0.35" text-anchor="end">6</text><text x="71.50" y="397.44" font-size="8.2" letter-spacing="1.2" stroke-width="0.35" text-anchor="end">6</text><text x="71.50" y="200.88" font-size="8.2" letter-spacing="1.2" stroke-width="0.35" text-anchor="end">8</text><text x="71.50" y="366.32" font-size="8.2" letter-spacing="1.2" stroke-width="0.35" text-anchor="end">8</text><text x="71.50" y="169.70" font-size="8.2" letter-spacing="1.2" stroke-width="0.35" text-anchor="end">10</text><text x="71.50" y="335.20" font-size="8.2" letter-spacing="1.2" stroke-width="0.35" text-anchor="end">10</text><text x="71.50" y="500.60" font-size="8.2" letter-spacing="1.2" stroke-width="0.35" text-anchor="end">5</text><text x="70.20" y="531.60" font-size="8.2" letter-spacing="1.2" stroke-width="0.35" text-anchor="end">-5</text><text x="79.90" y="549.1" font-size="8.7" letter-spacing="1" stroke-width="0.35" text-anchor="middle">0</text><text x="142.33" y="549.1" font-size="8.7" letter-spacing="1" stroke-width="0.35" text-anchor="middle">1</text><text x="204.76" y="549.1" font-size="8.7" letter-spacing="1" stroke-width="0.35" text-anchor="middle">2</text><text x="267.19" y="549.1" font-size="8.7" letter-spacing="1" stroke-width="0.35" text-anchor="middle">3</text><text x="329.62" y="549.1" font-size="8.7" letter-spacing="1" stroke-width="0.35" text-anchor="middle">4</text><text x="392.05" y="549.1" font-size="8.7" letter-spacing="1" stroke-width="0.35" text-anchor="middle">5</text><text x="454.48" y="549.1" font-size="8.7" letter-spacing="1" stroke-width="0.35" text-anchor="middle">6</text><text x="516.91" y="549.1" font-size="8.7" letter-spacing="1" stroke-width="0.35" text-anchor="middle">7</text><text x="579.34" y="549.1" font-size="8.7" letter-spacing="1" stroke-width="0.35" text-anchor="middle">8</text><text x="641.77" y="549.1" font-size="8.7" letter-spacing="1" stroke-width="0.35" text-anchor="middle">9</text><text x="704.20" y="549.1" font-size="8.7" letter-spacing="1" stroke-width="0.35" text-anchor="middle">10</text><text x="734.6" y="204.00" font-size="7.4" letter-spacing="0.5" stroke-width="0.3">-3</text><text x="734.6" y="231.05" font-size="7.4" letter-spacing="0.5" stroke-width="0.3">-4</text><text x="734.6" y="258.10" font-size="7.4" letter-spacing="0.5" stroke-width="0.3">-5</text><text x="734.6" y="285.15" font-size="7.4" letter-spacing="0.5" stroke-width="0.3">-6</text><text x="734.6" y="312.20" font-size="7.4" letter-spacing="0.5" stroke-width="0.3">-7</text><text x="734.6" y="369.50" font-size="7.4" letter-spacing="0.5" stroke-width="0.3">-3</text><text x="734.6" y="396.45" font-size="7.4" letter-spacing="0.5" stroke-width="0.3">-4</text><text x="734.6" y="423.40" font-size="7.4" letter-spacing="0.5" stroke-width="0.3">-5</text><text x="734.6" y="450.35" font-size="7.4" letter-spacing="0.5" stroke-width="0.3">-6</text><text x="734.6" y="477.30" font-size="7.4" letter-spacing="0.5" stroke-width="0.3">-7</text><text id="t_ch1v" x="0" y="0" font-size="9.0" textLength="30.95" lengthAdjust="spacing" transform="translate(50.1,158.00) rotate(-90)">ch.1(V)</text><text id="t_ch1" x="0" y="0" font-size="9.0" textLength="14.05" lengthAdjust="spacing" transform="translate(51.0,249.10) rotate(-90)">ch.1</text><text id="t_fq1" x="0" y="0" font-size="9.0" textLength="71.08" lengthAdjust="spacing" transform="translate(58.2,268.40) rotate(-90)">Frequency&#160; (kHz)</text><text id="t_ch2" x="0" y="0" font-size="9.0" textLength="12.65" lengthAdjust="spacing" transform="translate(51.0,414.10) rotate(-90)">ch.2</text><text id="t_fq2" x="0" y="0" font-size="9.0" textLength="71.08" lengthAdjust="spacing" transform="translate(58.2,433.40) rotate(-90)">Frequency&#160; (kHz)</text><text id="t_ch3v" x="0" y="0" font-size="9.0" textLength="31.55" lengthAdjust="spacing" transform="translate(50.3,529.00) rotate(-90)">ch.3(V)</text></g><g font-family="Liberation Serif" fill="#111" stroke="#111" stroke-width="0.12" xml:space="preserve" style="white-space:pre"><text id="t_cbl1" x="0" y="0" font-size="6.8" textLength="53.34" lengthAdjust="spacing" transform="translate(750.6,287.00) rotate(-90)">log(PSD)(V<tspan font-size="4.6" dy="-2.6">2</tspan><tspan dy="2.6">&#160;/Hz)</tspan></text><text id="t_cbl2" x="0" y="0" font-size="6.8" textLength="53.34" lengthAdjust="spacing" transform="translate(750.6,452.90) rotate(-90)">log(PSD)(V<tspan font-size="4.6" dy="-2.6">2</tspan><tspan dy="2.6">&#160;/Hz)</tspan></text></g></g></svg></body></html>
